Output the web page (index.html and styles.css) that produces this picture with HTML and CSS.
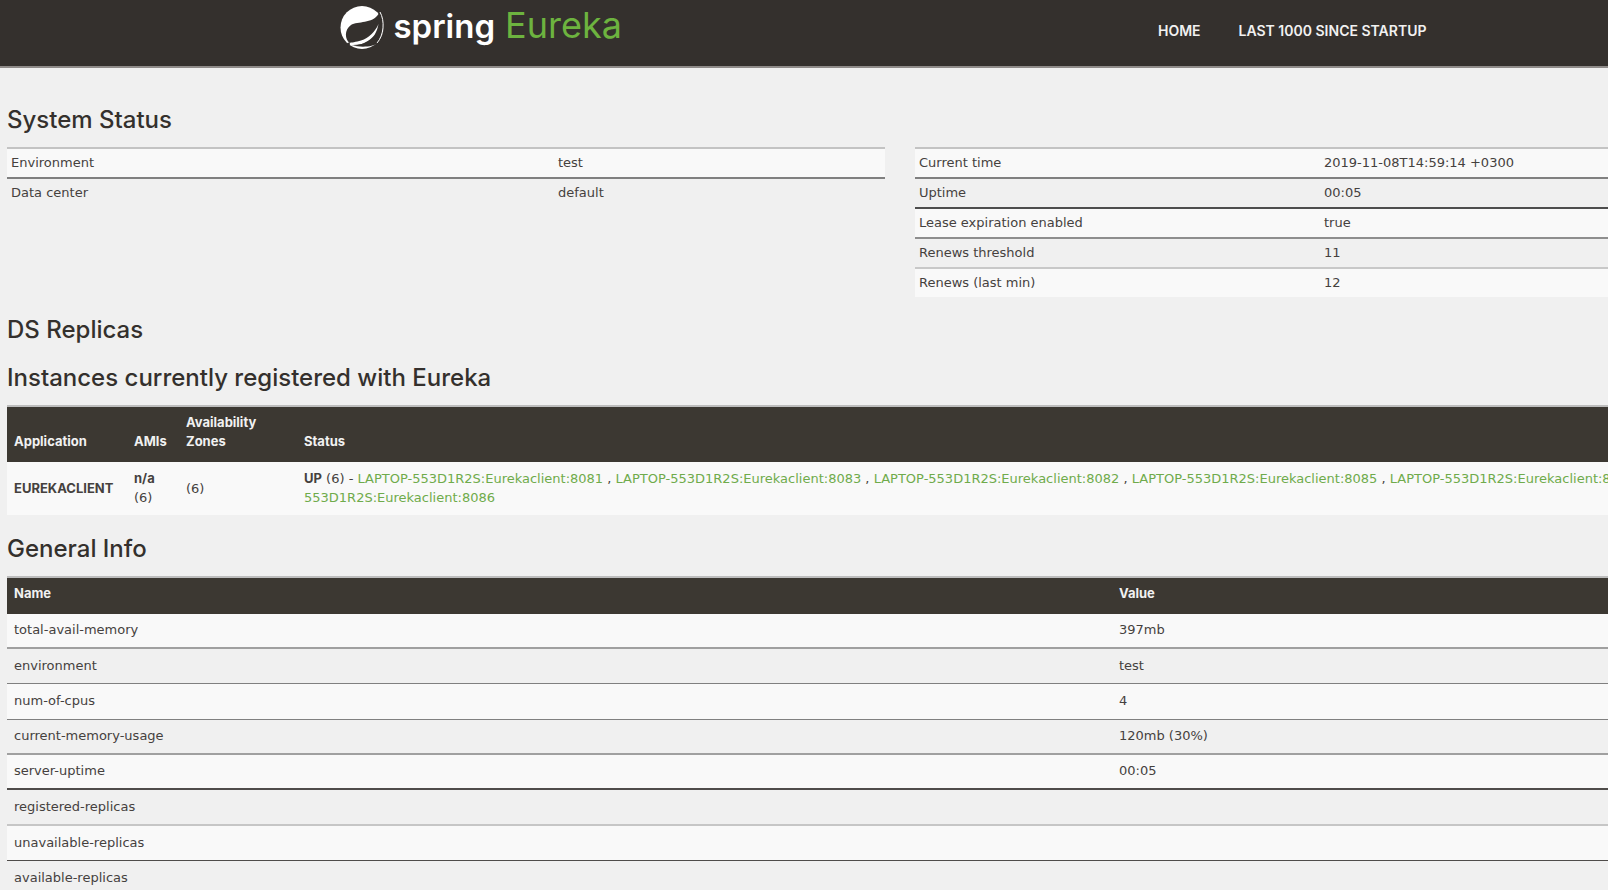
FILE: index.html
```html
<!DOCTYPE html>
<html lang="en">
<head>
<meta charset="utf-8">
<title>Eureka</title>
<link rel="stylesheet" href="styles.css">
</head>
<body>
<div class="page">
  <header class="navbar">
    <div class="navbar-inner">
      <a class="brand" href="#">
        <svg class="brand-leaf" viewBox="0 0 44 46" aria-hidden="true">
          <circle cx="22" cy="22.500" r="21.500" fill="#fff"/>
          <path d="M40 4C43 9 44.500 15 44 22C43.500 29 41 34 37.500 38C33 42 22 42.500 11 40.500C18 40.500 24 39 30 34.500C35 31 37 26 38.500 19C35 27 29 33 21 35.500C16 37 11 37.500 9.500 38C4 33 5 24 11 20C18 16 32 19 38.500 9Z" fill="#34302d"/>
          <path d="M40 7C45 16 44 30 37 38" fill="none" stroke="#fff" stroke-width="1"/>
          <path d="M37 37C31 41 22 41 13 40C24 40 32 36 37 27Z" fill="#34302d"/>
          <circle cx="8.500" cy="39" r="1.500" fill="#34302d"/>
        </svg>
        <span class="brand-spring">spring</span>
        <span class="brand-name">Eureka</span>
      </a>
      <nav class="nav">
        <a href="#">HOME</a>
        <a href="#">LAST 1000 SINCE STARTUP</a>
      </nav>
    </div>
  </header>

  <main class="content">
    <h1>System Status</h1>
    <div class="status-grid">
      <table class="condensed env">
        <tbody>
          <tr><td>Environment</td><td>test</td></tr>
          <tr><td>Data center</td><td>default</td></tr>
        </tbody>
      </table>
      <table class="condensed runtime">
        <tbody>
          <tr><td>Current time</td><td>2019-11-08T14:59:14 +0300</td></tr>
          <tr><td>Uptime</td><td>00:05</td></tr>
          <tr><td>Lease expiration enabled</td><td>true</td></tr>
          <tr><td>Renews threshold</td><td>11</td></tr>
          <tr><td>Renews (last min)</td><td>12</td></tr>
        </tbody>
      </table>
    </div>

    <h1 class="replicas">DS Replicas</h1>

    <h1>Instances currently registered with Eureka</h1>
    <table class="listing instances">
      <thead>
        <tr><th class="col-app">Application</th><th class="col-ami">AMIs</th><th class="col-zone">Availability Zones</th><th>Status</th></tr>
      </thead>
      <tbody>
        <tr>
          <td><b>EUREKACLIENT</b></td>
          <td><b>n/a</b> (6)</td>
          <td>(6)</td>
          <td><b>UP</b> (6) - <a href="#">LAPTOP-553D1R2S:Eurekaclient:8081</a> , <a href="#">LAPTOP-553D1R2S:Eurekaclient:8083</a> , <a href="#">LAPTOP-553D1R2S:Eurekaclient:8082</a> , <a href="#">LAPTOP-553D1R2S:Eurekaclient:8085</a> , <a href="#">LAPTOP-553D1R2S:Eurekaclient:8084</a> , <a href="#">LAPTOP-553D1R2S:Eurekaclient:8086</a></td>
        </tr>
      </tbody>
    </table>

    <h1>General Info</h1>
    <table class="listing info">
      <thead>
        <tr><th class="col-name">Name</th><th>Value</th></tr>
      </thead>
      <tbody>
        <tr><td>total-avail-memory</td><td>397mb</td></tr>
        <tr><td>environment</td><td>test</td></tr>
        <tr><td>num-of-cpus</td><td>4</td></tr>
        <tr><td>current-memory-usage</td><td>120mb (30%)</td></tr>
        <tr><td>server-uptime</td><td>00:05</td></tr>
        <tr><td>registered-replicas</td><td></td></tr>
        <tr><td>unavailable-replicas</td><td></td></tr>
        <tr><td>available-replicas</td><td></td></tr>
      </tbody>
    </table>
  </main>
</div>
</body>
</html>
```

FILE: styles.css
```css
* { box-sizing: border-box; }

html { background: #fff; overflow: hidden; }

body {
  margin: 0;
  overflow-x: hidden;
  color: #45413e;
  font-family: "DejaVu Sans", sans-serif;
  font-size: 13px;
  line-height: 19px;
}

/* The dashboard is wider than the window and runs off its right edge. */
.page {
  width: 112%;
  height: calc(100vh - 4px);
  overflow: hidden;
  background: #f0f0f0;
}

a { color: #6fab4b; text-decoration: none; }

b, th {
  font-family: Inter, sans-serif;
  font-size: 13px;
  font-weight: 700;
}

.navbar {
  background: #34302d;
  border-bottom: 2px solid #8f8b89;
  font-family: Inter, sans-serif;
}

.navbar-inner {
  display: flex;
  justify-content: space-between;
  width: 1120px;
  height: 66px;
  margin: 0 auto;
}

.brand {
  display: flex;
  align-items: flex-start;
  padding-top: 5px;
  color: #fff;
  font-size: 33px;
  line-height: 42px;
}

.brand-leaf { width: 44px; height: 46px; margin-right: 9px; }

.brand-spring { margin-right: 10px; font-weight: 600; }

.brand-name { color: #6db33f; font-size: 36px; line-height: 40px; }

.nav {
  display: flex;
  gap: 38px;
  padding: 21px 34px 0 0;
}

.nav a {
  color: #f1f1f1;
  font-size: 14px;
  font-weight: 600;
}

.content { padding: 35px 8px 0 7px; }

h1 {
  margin: 0 0 11px;
  color: #34302d;
  font-family: Inter, sans-serif;
  font-size: 24px;
  font-weight: 500;
  line-height: 33px;
}

.replicas { margin-bottom: 15px; }

table {
  width: 100%;
  border-collapse: separate;
  border-spacing: 0;
  table-layout: fixed;
}

th, td { text-align: left; }

tbody tr:nth-child(odd) { background: #f9f9f9; }

.status-grid {
  display: grid;
  grid-template-columns: 1fr 1fr;
  align-items: start;
  gap: 30px;
  margin-bottom: 16px;
}

.condensed td {
  height: 30px;
  padding: 0 4px 2px;
  border-top: 2px solid #808080;
}

.condensed tr:first-child td { border-top-color: #c3c3c3; }
.condensed tr:nth-child(3) td { border-top-color: #4d4d4d; }
.condensed tr:nth-child(4) td { border-top-color: #8e8e8e; }
.condensed tr:nth-child(5) td { border-top-color: #c8c8c8; }

.env td:first-child { width: 547px; }
.runtime td:first-child { width: 405px; }

.listing { border-top: 2px solid #bdbdbd; }

.listing th {
  padding: 6px 7px 11px;
  background: #3c3832;
  color: #f1f1f1;
  vertical-align: bottom;
}

.listing td { padding: 7px 7px 8px; }

.instances { margin-bottom: 17px; }
.col-app { width: 120px; }
.col-ami { width: 52px; }
.col-zone { width: 118px; }
.col-name { width: 1105px; }

.info td {
  height: 35px;
  padding: 0 7px 2px;
  border-bottom: 1px solid #808080;
}

.info tr:nth-child(3n) td { height: 36px; }

.info tbody tr:nth-child(3n + 1) td { border-bottom: 2px solid #a0a0a0; }
.info tbody tr:nth-child(5) td { border-bottom: 2px solid #4f4c4a; }
.info tbody tr:nth-child(6) td { border-bottom: 2px solid #c6c6c6; }
.info tbody tr:nth-child(7) td { border-bottom: 1px solid #4f4c4a; }
```
